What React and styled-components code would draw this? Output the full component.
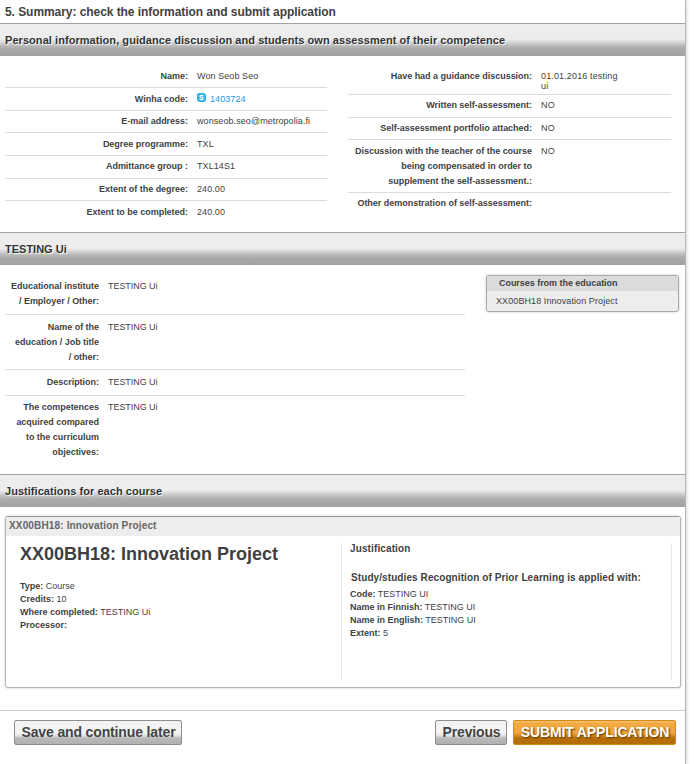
import React from "react";
import styled, { createGlobalStyle } from "styled-components";

const GlobalStyle = createGlobalStyle`
  * { box-sizing: border-box; }
  body {
    margin: 0;
    background: #fff;
    color: #3f3f3f;
    font-family: "Liberation Sans", Arial, Helvetica, sans-serif;
    font-size: 9px;
    line-height: 15px;
    overflow: hidden;
  }
  h1, h2, h3, h4, p { margin: 0; }
`;

const Page = styled.main`
  width: 686px;
  height: 764px;
  display: flex;
  flex-direction: column;
  border-right: 1px solid #b5b5b5;
  box-shadow: 1px 0 3px #d8d8d8;
`;

const StepTitle = styled.h1`
  height: 23px;
  padding: 5px 0 0 5px;
  font-size: 12px;
  letter-spacing: -0.06px;
  white-space: nowrap;
`;

const SectionBar = styled.h2`
  height: 33px;
  padding: 9px 0 0 5px;
  border-top: 1px solid #a3a3a3;
  background: linear-gradient(#ededed 0, #ededed 15px, #e0e0e0 17px, #b8b8b8 22px, #aaa 25px, #a2a2a2 32px);
  color: #333;
  font-size: 11px;
  letter-spacing: ${(p) => p.$spacing || 0}px;
  text-shadow: 1px 1px 1px #fff;
  white-space: nowrap;
`;

const PersonalInfo = styled.section`
  height: 176px;
  padding: 9px 14px 0 5px;
  display: flex;
  justify-content: space-between;
`;

const InfoList = styled.div`
  width: ${(p) => p.$width}px;
`;

const Row = styled.div`
  height: ${(p) => p.$height}px;
  padding-top: ${(p) => p.$top}px;
  display: grid;
  grid-template-columns: ${(p) => p.$label}px 1fr;
  column-gap: 9px;
  align-items: start;
  border-bottom: 1px solid #dcdcdc;
  &:last-child { border-bottom: 0; }
`;

const Label = styled.span`
  font-weight: bold;
  text-align: right;
  white-space: pre-line;
  letter-spacing: -0.025px;
`;

const Value = styled.span`
  display: flex;
  align-items: center;
  gap: 4px;
  letter-spacing: ${(p) => p.$spacing || 0}px;
`;

const NarrowValue = styled.span`
  width: 80px;
  padding-top: 2px;
  line-height: 10px;
  letter-spacing: 0.14px;
`;

const CodeLink = styled.a`
  color: #2196f3;
`;

const Education = styled.section`
  height: 209px;
  padding: 9px 6px 0 5px;
  display: flex;
  justify-content: space-between;
`;

const CourseBox = styled.aside`
  width: 193px;
  height: 37px;
  margin-top: 1px;
  border: 1px solid #aaa;
  border-radius: 3px;
  background: #ededed;
  box-shadow: 0 0 3px #ccc;
  overflow: hidden;
`;

const CourseBoxTitle = styled.h3`
  height: 15px;
  padding-left: 12px;
  background: #dcdcdc;
  font-size: 9px;
  letter-spacing: -0.04px;
`;

const CourseBoxItem = styled.p`
  padding: 3px 0 0 9px;
  letter-spacing: 0.09px;
`;

const CoursePanel = styled.article`
  width: 676px;
  height: 172px;
  margin: 9px 0 0 5px;
  border: 1px solid #b5b5b5;
  border-top-color: #999;
  border-radius: 3px;
  box-shadow: 0 0 3px #d0d0d0;
`;

const CoursePanelTitle = styled.h3`
  height: 19px;
  padding: 1px 0 0 3px;
  background: #ededed;
  color: #666;
  font-size: 10px;
  letter-spacing: 0.15px;
`;

const CoursePanelBody = styled.div`
  display: grid;
  grid-template-columns: 336px 330px;
  height: 137px;
  margin-top: 7px;
`;

const CourseColumn = styled.div`
  padding-left: ${(p) => p.$inset}px;
  border-right: 1px solid #eaeaea;
`;

const CourseHeading = styled.h2`
  height: 37px;
  font-size: 18px;
  line-height: 22px;
`;

const JustificationHeading = styled.h4`
  height: 28px;
  line-height: 12px;
  font-size: 10px;
  letter-spacing: 0.12px;
`;

const AppliedHeading = styled.h4`
  height: 17px;
  padding-left: 1px;
  line-height: 14px;
  font-size: 10px;
  letter-spacing: 0.09px;
  white-space: nowrap;
`;

const Fact = styled.p`
  line-height: 13px;
`;

const Footer = styled.footer`
  height: 54px;
  margin-top: 22px;
  padding: 9px 9px 0 14px;
  display: flex;
  gap: 6px;
  border-top: 1px solid #c8c8c8;
`;

const Button = styled.button`
  width: ${(p) => p.$width}px;
  height: 25px;
  padding: 0 0 1px 1px;
  border: 1px solid #8e8e8e;
  border-radius: 2px;
  background: linear-gradient(#f2f2f2, #f4f4f4 12px, #dedede 15px, #bababa 17px, #b0b0b0);
  color: #444;
  font: bold 14px/22px "Liberation Sans", Arial, sans-serif;
  letter-spacing: -0.14px;
  white-space: nowrap;
  &:first-child { margin-right: auto; }
`;

const SubmitButton = styled(Button)`
  border-color: #d18b18;
  background: linear-gradient(#f6c27a 0, #f2ab42 2px, #f0a63c 12px, #d18618 15px, #b8700a 17px, #b56d08);
  color: #fff;
  text-shadow: 1px 1px 2px #503000;
`;

const SkypeMark = styled.svg`
  flex: none;
  margin-top: -4px;
`;

function SkypeIcon() {
  return (
    <SkypeMark width="9" height="9" viewBox="0 0 9 9" aria-hidden="true">
      <path
        d="M2.400 0H6A3 3 0 0 1 9 3V6.600A2.400 2.400 0 0 1 6.600 9H3A3 3 0 0 1 0 6V2.400A2.400 2.400 0 0 1 2.400 0z"
        fill="#2fb2ea"
      />
      <path
        d="M6.200 3.200C5.700 2 2.900 1.900 2.800 3.300c0 1.400 3.500.8 3.400 2.300C6.100 7.100 3.200 7 2.700 5.800"
        fill="none"
        stroke="#fff"
        strokeWidth="1.200"
      />
    </SkypeMark>
  );
}

const personal = [
  ["Name:", "Won Seob Seo", 23, 4],
  ["Winha code:", "1403724", 23, 4],
  ["E-mail address:", "wonseob.seo@metropolia.fi", 22, 3],
  ["Degree programme:", "TXL", 23, 4],
  ["Admittance group :", "TXL14S1", 23, 3],
  ["Extent of the degree:", "240.00", 22, 3],
  ["Extent to be completed:", "240.00", 23, 4],
];

const assessment = [
  ["Have had a guidance discussion:", "01.01.2016 testing ui", 30, 4],
  ["Written self-assessment:", "NO", 23, 3],
  ["Self-assessment portfolio attached:", "NO", 22, 3],
  [
    "Discussion with the teacher of the course\nbeing compensated in order to\nsupplement the self-assessment.:",
    "NO",
    53,
    4,
  ],
  ["Other demonstration of self-assessment:", "", 23, 3],
];

const education = [
  ["Educational institute\n/ Employer / Other:", 41, 5],
  ["Name of the\neducation / Job title\n/ other:", 55, 5],
  ["Description:", 26, 5],
  ["The competences\nacquired compared\nto the curriculum\nobjectives:", 64, 4],
];

export default function App() {
  return (
    <>
      <GlobalStyle />
      <Page>
        <StepTitle>5. Summary: check the information and submit application</StepTitle>

        <SectionBar $spacing={0.056}>
          Personal information, guidance discussion and students own assessment of their competence
        </SectionBar>
        <PersonalInfo>
          <InfoList $width={322}>
            {personal.map(([label, value, height, top]) => (
              <Row key={label} $height={height} $top={top} $label={183}>
                <Label>{label}</Label>
                <Value $spacing={0.08}>
                  {label === "Winha code:" ? (
                    <>
                      <SkypeIcon />
                      <CodeLink>{value}</CodeLink>
                    </>
                  ) : (
                    value
                  )}
                </Value>
              </Row>
            ))}
          </InfoList>
          <InfoList $width={323}>
            {assessment.map(([label, value, height, top]) => (
              <Row key={label} $height={height} $top={top} $label={184}>
                <Label>{label}</Label>
                <NarrowValue>{value}</NarrowValue>
              </Row>
            ))}
          </InfoList>
        </PersonalInfo>

        <SectionBar>TESTING Ui</SectionBar>
        <Education>
          <InfoList $width={460}>
            {education.map(([label, height, top]) => (
              <Row key={label} $height={height} $top={top} $label={94}>
                <Label>{label}</Label>
                <Value $spacing={-0.05}>TESTING Ui</Value>
              </Row>
            ))}
          </InfoList>
          <CourseBox>
            <CourseBoxTitle>Courses from the education</CourseBoxTitle>
            <CourseBoxItem>XX00BH18 Innovation Project</CourseBoxItem>
          </CourseBox>
        </Education>

        <SectionBar $spacing={0.04}>Justifications for each course</SectionBar>
        <CoursePanel>
          <CoursePanelTitle>XX00BH18: Innovation Project</CoursePanelTitle>
          <CoursePanelBody>
            <CourseColumn $inset={14}>
              <CourseHeading>XX00BH18: Innovation Project</CourseHeading>
              <Fact><b>Type:</b> Course</Fact>
              <Fact><b>Credits:</b> 10</Fact>
              <Fact><b>Where completed:</b> TESTING Ui</Fact>
              <Fact><b>Processor:</b></Fact>
            </CourseColumn>
            <CourseColumn $inset={8}>
              <JustificationHeading>Justification</JustificationHeading>
              <AppliedHeading>Study/studies Recognition of Prior Learning is applied with:</AppliedHeading>
              <Fact><b>Code:</b> TESTING UI</Fact>
              <Fact><b>Name in Finnish:</b> TESTING UI</Fact>
              <Fact><b>Name in English:</b> TESTING UI</Fact>
              <Fact><b>Extent:</b> 5</Fact>
            </CourseColumn>
          </CoursePanelBody>
        </CoursePanel>

        <Footer>
          <Button $width={168}>Save and continue later</Button>
          <Button $width={72}>Previous</Button>
          <SubmitButton $width={163}>SUBMIT APPLICATION</SubmitButton>
        </Footer>
      </Page>
    </>
  );
}
